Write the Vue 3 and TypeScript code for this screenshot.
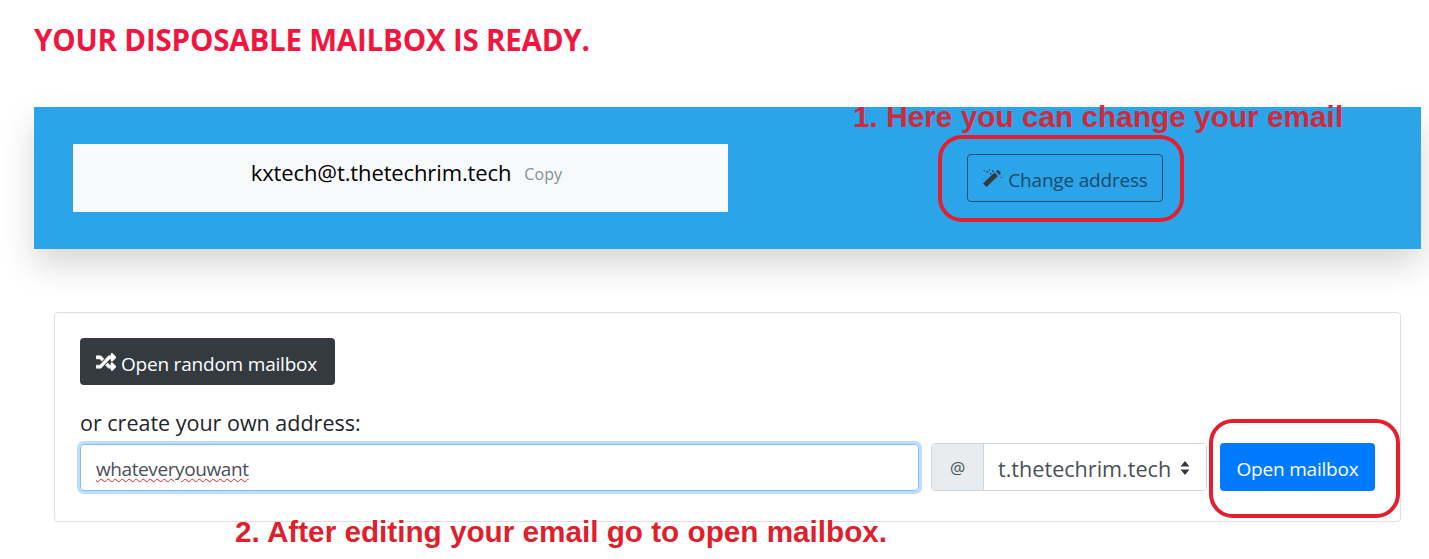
<script setup lang="ts">
import { ref } from 'vue'

const email = 'kxtech@t.thetechrim.tech'
const domain = ref('t.thetechrim.tech')
const domains = ['t.thetechrim.tech']

const randomIcon =
  'M504.971 359.029c9.373 9.373 9.373 24.569 0 33.941l-80 79.984c-15.01 15.01-40.971 4.49-40.971-16.971V416h-58.785a12.004 12.004 0 0 1-8.773-3.812l-70.556-75.596 53.333-57.143L352 336h32v-39.981c0-21.438 25.943-31.998 40.971-16.971l80 79.981zM12 176h84l52.781 56.551 53.333-57.143-70.556-75.596A11.999 11.999 0 0 0 122.785 96H12c-6.627 0-12 5.373-12 12v56c0 6.627 5.373 12 12 12zm372 0v39.984c0 21.46 25.961 31.98 40.971 16.971l80-79.984c9.373-9.373 9.373-24.569 0-33.941l-80-79.981C409.943 24.021 384 34.582 384 56.019V96h-58.785a12.004 12.004 0 0 0-8.773 3.812L96 336H12c-6.627 0-12 5.373-12 12v56c0 6.627 5.373 12 12 12h110.785c3.326 0 6.503-1.381 8.773-3.812L352 176h32z'
</script>

<template>
  <div class="page">
    <h1 class="title">YOUR DISPOSABLE MAILBOX IS READY.</h1>

    <section class="hero">
      <div class="address">
        <span class="email">{{ email }}</span>
        <span class="copy">Copy</span>
      </div>
      <div class="hero-action">
        <button class="btn btn-outline">
          <svg class="icon" viewBox="0 0 20 20">
            <path d="M1 15.500 12.500 4.500 16 8 4.500 19z" />
            <path d="M14 3.500 16 1.800 19 5 17.300 7z" />
            <path d="M1.500 2h1.500v1H1.500zM4.500 3h1.500v1.500H4.500zM7 1h1v1.500H7zM8 5h1.500v1.500H8zM10 2.500h1.500v1.500H10zM18.500 9h1v1h-1z" />
          </svg>
          <span class="btn-label">Change address</span>
        </button>
      </div>
    </section>

    <section class="card">
      <button class="btn btn-dark">
        <svg class="icon icon-bold" viewBox="0 0 512 512"><path :d="randomIcon" /></svg>
        <span class="btn-label">Open random mailbox</span>
      </button>
      <label class="own-label">or create your own address:</label>
      <div class="own-row">
        <div class="input"><span class="misspelled">whateveryouwant</span></div>
        <div class="domain">
          <span class="at">@</span>
          <div class="select-wrap">
            <select v-model="domain" class="select">
              <option v-for="d in domains" :key="d" :value="d">{{ d }}</option>
            </select>
            <svg class="carets" viewBox="0 0 10 14"><path d="M5 0 9.500 5.500H.5zM5 14 .5 8.500H9.500z" /></svg>
          </div>
        </div>
        <button class="btn btn-primary"><span class="btn-label">Open mailbox</span></button>
      </div>
    </section>

    <!-- annotations drawn on top of the screenshot -->
    <span class="note note-one">1. Here you can change your email</span>
    <span class="note note-two">2. After editing your email go to open mailbox.</span>
    <div class="ring ring-one"></div>
    <div class="ring ring-two"></div>
  </div>
</template>

<style scoped>
.page {
  position: relative;
  height: 559px;
  overflow: hidden;
  box-sizing: border-box;
  padding: 22px 8px 0 34px;
  background: #fff;
  font-family: "Open Sans", "Noto Sans", sans-serif;
  color: #212529;
}

.title {
  margin: 0;
  height: 85px;
  color: #f2163f;
  font-size: 29.5px;
  line-height: 36px;
  font-weight: 700;
  letter-spacing: -0.2px;
}

.hero {
  display: flex;
  align-items: flex-start;
  height: 142px;
  box-sizing: border-box;
  padding: 37px 0 0 39px;
  background: #2ca4ea;
  box-shadow: 0 16px 32px rgba(0, 0, 0, 0.16);
}

.address {
  display: flex;
  justify-content: center;
  gap: 13px;
  width: 655px;
  height: 68px;
  padding: 13px 0 0 12px;
  box-sizing: border-box;
  background: #f8f9fa;
}

.email {
  color: #000;
  font-size: 22px;
  line-height: 30px;
  letter-spacing: -0.12px;
}

.copy {
  color: #868e96;
  font-size: 16px;
  line-height: 34px;
  letter-spacing: 0.1px;
}

.hero-action {
  padding: 10px 0 0 239px;
}

.btn {
  display: inline-flex;
  align-items: center;
  justify-content: center;
  box-sizing: border-box;
  height: 48px;
  border: 1px solid transparent;
  border-radius: 4px;
  font-family: inherit;
  font-size: 19px;
  letter-spacing: -0.2px;
}

.btn-label {
  position: relative;
  top: 2px;
}

.icon {
  width: 20px;
  height: 20px;
  margin-right: 5px;
  fill: currentColor;
}

.icon-bold {
  stroke: currentColor;
  stroke-width: 14;
}

.btn-outline {
  width: 196px;
  border-color: #1d4f70;
  background: transparent;
  color: #1b4a68;
}

.btn-outline .icon {
  margin-right: 6px;
  color: #343a40;
}

.btn-dark {
  width: 255px;
  height: 47px;
  padding-right: 8px;
  background: #343a40;
  color: #fff;
}

.btn-primary {
  flex: none;
  width: 155px;
  margin-left: 13px;
  background: #007bff;
  color: #fff;
}

.card {
  display: flex;
  flex-direction: column;
  align-items: flex-start;
  box-sizing: border-box;
  width: 1347px;
  height: 210px;
  margin: 63px 0 0 20px;
  padding: 25px;
  border: 1px solid #dfdfdf;
  border-radius: 4px;
}

.own-label {
  margin-top: 23px;
  color: #212529;
  font-size: 21.5px;
  line-height: 30px;
}

.own-row {
  display: flex;
  align-items: center;
  margin-top: 5px;
}

.input {
  box-sizing: border-box;
  width: 839px;
  height: 47px;
  padding: 9px 15px;
  border: 1px solid #80bdff;
  border-radius: 4px;
  box-shadow: 0 0 0 3px #bfdeff;
  color: #495057;
  font-size: 19px;
  line-height: 30px;
  letter-spacing: -0.4px;
}

.misspelled {
  text-decoration: underline wavy #e0202c 1px;
  text-underline-offset: 2px;
}

.domain {
  display: flex;
  box-sizing: border-box;
  width: 276px;
  height: 48px;
  margin-left: 12px;
  border: 1px solid #ced4da;
  border-radius: 4px;
  overflow: hidden;
}

.at {
  display: flex;
  align-items: center;
  justify-content: center;
  flex: none;
  width: 51px;
  border-right: 1px solid #ced4da;
  background: #e9ecef;
  color: #495057;
  font-size: 17px;
}

.select-wrap {
  position: relative;
  flex: 1;
  min-width: 0;
}

.select {
  width: 100%;
  height: 100%;
  padding: 3px 0 0 14px;
  border: 0;
  outline: 0;
  background: #fff;
  appearance: none;
  color: #495057;
  font-family: inherit;
  font-size: 21.6px;
}

.carets {
  position: absolute;
  top: 17px;
  right: 16px;
  width: 10px;
  height: 14px;
  fill: #343a40;
}

.note {
  position: absolute;
  color: #e01f2d;
  font-family: "Liberation Sans", Arial, sans-serif;
  font-size: 29.7px;
  line-height: 34px;
  font-weight: 700;
  white-space: nowrap;
}

.note-one {
  top: 100px;
  left: 853px;
  font-size: 29.8px;
  opacity: 0.92;
}

.note-two {
  top: 515px;
  left: 235px;
}

.ring {
  position: absolute;
  box-sizing: border-box;
  border: 4px solid #e3202f;
  border-radius: 24px;
}

.ring-one {
  top: 135px;
  left: 938px;
  width: 246px;
  height: 87px;
}

.ring-two {
  top: 419px;
  left: 1209px;
  width: 191px;
  height: 99px;
}
</style>
